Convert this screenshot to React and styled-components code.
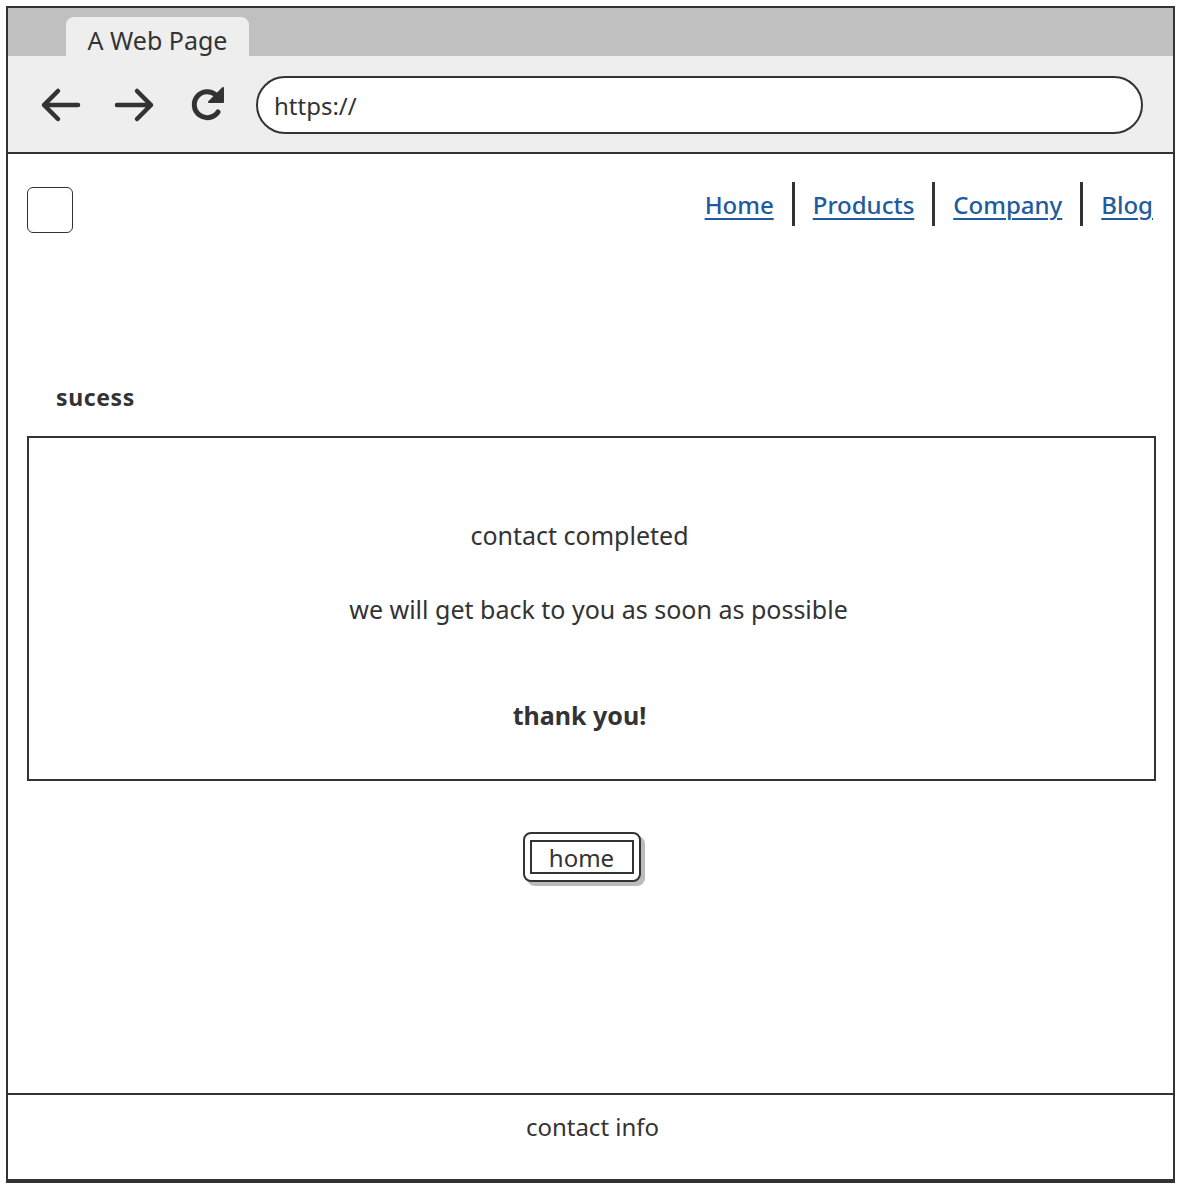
import styled, { createGlobalStyle } from 'styled-components';

const GlobalStyle = createGlobalStyle`
  html, body {
    margin: 0;
    padding: 0;
    background: #ffffff;
  }
  body {
    font-family: 'Noto Sans', 'Liberation Sans', sans-serif;
    color: #333333;
  }
`;

const Page = styled.div`
  padding: 6px 0 0 6px;
`;

const Frame = styled.div`
  width: 1165px;
  height: 1173px;
  border: 2px solid #333333;
  display: flex;
  flex-direction: column;
`;

const TabBar = styled.div`
  height: 48px;
  background: #c0c0c0;
  display: flex;
  align-items: flex-end;
  padding-left: 58px;
`;

const Tab = styled.div`
  width: 183px;
  height: 39px;
  background: #eeeeee;
  border-radius: 8px 8px 0 0;
  font-size: 25px;
  display: flex;
  align-items: center;
  justify-content: center;
  padding-top: 6px;
  box-sizing: border-box;
`;

const Toolbar = styled.div`
  height: 98px;
  background: #eeeeee;
  border-bottom: 2px solid #333333;
  display: flex;
  align-items: center;
  padding: 2px 30px 0 30px;
  box-sizing: border-box;
`;

const NavIcon = styled.svg`
  width: 44px;
  height: 44px;
  margin-right: ${(p) => p.$gap}px;
  flex-shrink: 0;
`;

const UrlBar = styled.div`
  flex: 1;
  height: 54px;
  border: 2px solid #333333;
  border-radius: 30px;
  background: #ffffff;
  display: flex;
  align-items: center;
  padding-left: 16px;
  font-size: 24px;
  margin-left: -3px;
`;

const Content = styled.div`
  flex: 1;
  display: flex;
  flex-direction: column;
`;

const Header = styled.div`
  display: flex;
  justify-content: space-between;
  align-items: center;
  padding: 33px 20px 0 19px;
`;

const Logo = styled.div`
  width: 44px;
  height: 44px;
  border: 1.5px solid #333333;
  border-radius: 6px;
`;

const Nav = styled.nav`
  display: flex;
  align-items: center;
  margin-top: -12px;
`;

const NavLink = styled.a`
  font-size: 24px;
  font-weight: 500;
  color: #1f5b9e;
  text-decoration: underline;
  text-underline-offset: 4px;
  text-decoration-thickness: 2px;
  cursor: pointer;
`;

const Divider = styled.span`
  width: 3px;
  height: 44px;
  background: #333333;
  margin: 0 18px;
`;

const Title = styled.h2`
  margin: 149px 0 0 48px;
  font-size: 23px;
  letter-spacing: 0.6px;
  font-weight: 700;
  line-height: 30px;
`;

const Panel = styled.div`
  margin: 24px 17px 0 19px;
  height: 341px;
  border: 2px solid #333333;
  display: flex;
  flex-direction: column;
  align-items: center;
`;

const Line = styled.p`
  margin: ${(p) => p.$top}px 0 0 0;
  font-size: 25px;
  line-height: 32px;
  font-weight: ${(p) => (p.$bold ? 700 : 400)};
  transform: translateX(${(p) => p.$shift || 0}px);
`;

const ButtonRow = styled.div`
  display: flex;
  justify-content: center;
  margin-top: 51px;
  padding-right: 18px;
`;

const Button = styled.button`
  width: 118px;
  height: 50px;
  border: 2px solid #333333;
  border-radius: 8px;
  background: #ffffff;
  box-shadow: 4px 4px 0 #bbbbbb;
  padding: 6px 5px;
  box-sizing: border-box;
  font-family: inherit;
  cursor: pointer;
`;

const ButtonInner = styled.span`
  display: flex;
  align-items: center;
  justify-content: center;
  height: 100%;
  border: 2px solid #333333;
  font-size: 24px;
  color: #333333;
  box-sizing: border-box;
`;

const Footer = styled.footer`
  height: 88px;
  border-top: 2px solid #333333;
  border-bottom: 2px solid #333333;
  margin: 0 -2px;
  display: flex;
  justify-content: center;
  padding: 16px 0 0 4px;
  box-sizing: border-box;
  font-size: 24px;
  line-height: 32px;
`;

const Spacer = styled.div`
  flex: 1;
`;

const BackIcon = () => (
  <NavIcon viewBox="0 0 44 44" $gap={31}>
    <path d="M40 22H6M20 8L6 22l14 14" fill="none" stroke="#333" strokeWidth="4.5" strokeLinecap="round" strokeLinejoin="round" />
  </NavIcon>
);

const ForwardIcon = () => (
  <NavIcon viewBox="0 0 44 44" $gap={28}>
    <path d="M4 22h34M24 8l14 14-14 14" fill="none" stroke="#333" strokeWidth="4.5" strokeLinecap="round" strokeLinejoin="round" />
  </NavIcon>
);

const ReloadIcon = () => (
  <NavIcon viewBox="0 0 44 44" $gap={30}>
    <path d="M33 29A13 13 0 1 1 31 12" fill="none" stroke="#333" strokeWidth="5" strokeLinecap="round" />
    <path d="M38 5v14H24z" fill="#333" stroke="#333" strokeWidth="2" strokeLinejoin="round" />
  </NavIcon>
);

const links = ['Home', 'Products', 'Company', 'Blog'];

export default function App() {
  return (
    <Page>
      <GlobalStyle />
      <Frame>
        <TabBar>
          <Tab>A Web Page</Tab>
        </TabBar>
        <Toolbar>
          <BackIcon />
          <ForwardIcon />
          <ReloadIcon />
          <UrlBar>https://</UrlBar>
        </Toolbar>
        <Content>
          <Header>
            <Logo />
            <Nav>
              {links.map((l, i) => (
                <span key={l} style={{ display: 'contents' }}>
                  {i > 0 && <Divider />}
                  <NavLink>{l}</NavLink>
                </span>
              ))}
            </Nav>
          </Header>
          <Title>sucess</Title>
          <Panel>
            <Line $top={81} $shift={-12}>contact completed</Line>
            <Line $top={42} $shift={7}>we will get back to you as soon as possible</Line>
            <Line $top={74} $shift={-12} $bold>thank you!</Line>
          </Panel>
          <ButtonRow>
            <Button>
              <ButtonInner>home</ButtonInner>
            </Button>
          </ButtonRow>
          <Spacer />
        </Content>
        <Footer>contact info</Footer>
      </Frame>
    </Page>
  );
}
